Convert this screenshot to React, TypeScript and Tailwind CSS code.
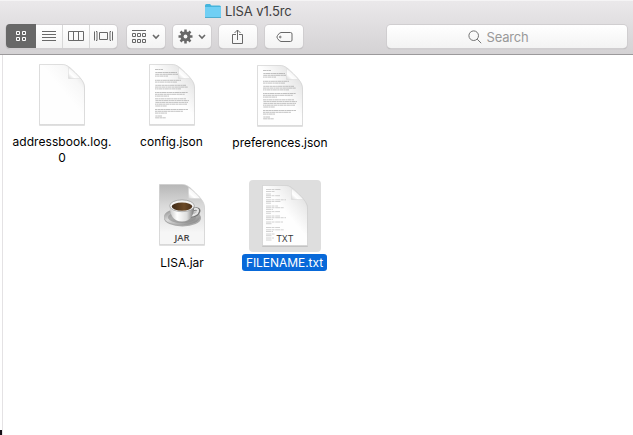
import React from "react";

function Page({ id, children, shade = false }: { id: string; children?: React.ReactNode; shade?: boolean }) {
  return (
    <svg width="52" height="66" viewBox="-3 -2 52 66" className="block overflow-visible">
      <defs>
        <linearGradient id={`${id}-body`} x1="1" y1="0" x2="0.45" y2="0.6">
          <stop offset="0" stopColor="#d4d4d4" />
          <stop offset="0.4" stopColor={shade ? "#ebebeb" : "#f7f7f7"} />
          <stop offset="0.8" stopColor="#fefefe" />
        </linearGradient>
        <linearGradient id={`${id}-jar`} x1="0" y1="0" x2="0" y2="1">
          <stop offset="0" stopColor="#b7b7b7" />
          <stop offset="0.35" stopColor="#d9d9d9" />
          <stop offset="0.8" stopColor="#f6f6f6" />
        </linearGradient>
        <linearGradient id={`${id}-fold`} x1="0" y1="1" x2="0.65" y2="0.35">
          <stop offset="0" stopColor="#d8d8d8" />
          <stop offset="0.45" stopColor="#ffffff" />
          <stop offset="1" stopColor="#f0f0f0" />
        </linearGradient>
        <filter id={`${id}-shadow`} x="-20%" y="-10%" width="140%" height="130%">
          <feDropShadow dx="0" dy="0.5" stdDeviation="0.7" floodOpacity="0.3" />
        </filter>
      </defs>
      <path
        d="M.5.5H23C28 .5 31 3.500 36 8.500C42 14.500 45.500 18 45.500 24V60.500H.5Z"
        fill={id === "jar" ? "url(#jar-jar)" : `url(#${id}-body)`}
        stroke="#d0d0d0"
        strokeWidth=".6"
        filter={`url(#${id}-shadow)`}
      />
      {children}
      <path d="M29.500 3.500V14.500H41.500C37.500 10 34 6.500 29.500 3.500Z" fill={`url(#${id}-fold)`} stroke="#d2d2d2" strokeWidth=".4" />
    </svg>
  );
}

const paragraphs: number[][] = [
  [5.500, 8], [8.500, 22], [10.300, 23], [12.100, 13], [16.300, 26], [18.100, 22],
  [21.300, 31], [23.100, 33], [24.900, 26], [28.500, 33], [30.300, 30], [32.100, 14],
  [34.800, 31], [36.600, 34], [38.400, 33], [40.200, 32], [42, 12], [45.500, 33],
  [47.300, 28], [49.100, 12], [52, 7], [53.800, 11],
];

function Letter() {
  return (
    <g stroke="#848484" strokeWidth=".8" opacity=".62" strokeDasharray="3.400 .3 1.700 .25 4.200 .35 2.300 .3">
      {paragraphs.map(([y, w], i) => <path key={y} d={`M6 ${y}h${w}`} strokeDashoffset={i * 2.7} />)}
    </g>
  );
}

const listing: number[][] = [
  [4.500, 15], [6.500, 9], [9, 5], [10.700, 14], [12.400, 5], [14.800, 20], [16.500, 15], [18.200, 5], [21, 12], [22.700, 18], [24.400, 7], [26.600, 14], [28.300, 5],
  [31, 14], [32.700, 20], [34.400, 7], [37, 17], [38.700, 6], [42.500, 14], [44.800, 18], [46.500, 7], [49, 9], [50.700, 6], [53, 8], [55, 6],
];

function Cup() {
  return (
    <g>
      <defs>
        <linearGradient id="saucer" x1="0" x2="1" y2="1">
          <stop stopColor="#787878" /><stop offset=".4" stopColor="#dcdcdc" /><stop offset="1" stopColor="#777" />
        </linearGradient>
        <linearGradient id="china" x1="0" x2="1">
          <stop stopColor="#c9c9c9" /><stop offset=".3" stopColor="#fff" /><stop offset=".7" stopColor="#ddd" /><stop offset="1" stopColor="#777" />
        </linearGradient>
        <linearGradient id="coffee"><stop stopColor="#3d2816" /><stop offset=".6" stopColor="#6c4a27" /><stop offset="1" stopColor="#49301b" /></linearGradient>
      </defs>
      <ellipse cx="23.500" cy="34" rx="18.500" ry="8.500" fill="#666" opacity=".5" />
      <ellipse cx="23" cy="32.700" rx="18" ry="8.500" fill="url(#saucer)" />
      <ellipse cx="23" cy="33.500" rx="14" ry="5.500" fill="#888" opacity=".55" />
      <path d="M34.500 25.500c8-3 7 6-3 6.500" fill="none" stroke="#747474" strokeWidth="3.300" />
      <path d="M34.500 25.200c7-2.500 6 5.500-3 6.500" fill="none" stroke="#e5e5e5" strokeWidth="2" />
      <path d="M10.800 21.500C10.500 30 14 37.500 23 37.500S35.500 30 35.200 21.500Z" fill="url(#china)" />
      <ellipse cx="23" cy="21.800" rx="12.300" ry="5.900" fill="#f4f4f4" stroke="#8f8f8f" strokeWidth=".6" />
      <ellipse cx="23" cy="22.600" rx="10.300" ry="4.200" fill="url(#coffee)" />
    </g>
  );
}

const button = "h-[23px] flex shrink-0 items-center justify-center rounded-[4px] bg-linear-to-b from-white to-[#f3f3f3] shadow-[0_0_0_1px_#d0ced0,0_1px_1px_#a5a3a5] text-[#686868]";

function Chevron() {
  return <svg width="8" height="6" viewBox="0 0 8 6"><path d="M1 1l3 3 3-3" fill="none" stroke="currentColor" strokeWidth="1.600" /></svg>;
}

function Toolbar() {
  return (
    <header className="h-[55px] border-b border-[#9b999b] bg-linear-to-b from-[#ebe9eb] to-[#d4d2d4] shadow-[inset_0_1px_0_#f5f4f5]">
      <div className="flex h-[24px] pl-[205px] pt-[3px]">
        <svg width="16" height="16" viewBox="0 0 16 16" className="mr-[4px]">
          <path d="M0 13V2.500Q0 1 1.500 1H5L6.500 2.500H14.500Q16 2.500 16 4V13Z" fill="#45b4dc" />
          <path d="M0 4H16V14.500H0Z" fill="#70cff4" /><path d="M0 14.500H16" stroke="#4facce" />
        </svg>
        <h1 className="whitespace-nowrap text-[13px] font-normal leading-[17px] tracking-[-0.12px] text-[#403e40]">LISA v1.5rc</h1>
      </div>
      <div className="flex px-[6px] pt-[1px]">
        <div className={`${button} w-[111px]`}>
          <div className="-mt-px flex h-[24px] w-[30px] shrink-0 items-center justify-center rounded-l-[4px] bg-[#686868]">
            <svg width="11" height="11" viewBox="0 0 11 11" fill="none" stroke="white"><path d="M.5.5h3v3h-3ZM6.500.5h3v3h-3ZM.5 6.500h3v3h-3ZM6.500 6.500h3v3h-3Z" /></svg>
          </div>
          <div className="flex h-full w-[27px] items-center justify-center border-r border-[#d8d8d8]">
            <svg width="14" height="11" stroke="currentColor"><path d="M0 .5h14M0 3.500h14M0 6.500h14M0 9.500h14" /></svg>
          </div>
          <div className="flex h-full w-[27px] items-center justify-center border-r border-[#d8d8d8]">
            <svg width="16" height="11" fill="none" stroke="currentColor"><path d="M.5.5h15v9H.5ZM5.500.5v9M10.500.5v9" /></svg>
          </div>
          <div className="flex h-full w-[27px] items-center justify-center">
            <svg width="19" height="11" fill="none" stroke="currentColor"><path d="M.5.5v9M5.500 1.500h8v7h-8ZM18.500.5v9M2 .5h1v9H2M17 .5h-1v9h1" /></svg>
          </div>
        </div>
        <div className={`${button} ml-[10px] w-[38px] gap-[5px]`}>
          <svg width="15" height="14" fill="none" stroke="currentColor"><path d="M0 .5h14M.5 3.500h3v3h-3ZM5.500 3.500h3v3h-3ZM10.500 3.500h3v3h-3ZM.5 9.500h3v3h-3ZM5.500 9.500h3v3h-3ZM10.500 9.500h3v3h-3Z" /></svg>
          <Chevron />
        </div>
        <div className={`${button} ml-[8px] w-[38px] gap-[5px]`}>
          <svg width="15" height="15" viewBox="0 0 15 15">
            <g stroke="currentColor" strokeWidth="2.500"><path d="M7.500.5v14M.5 7.500h14M2.500 2.500l10 10M12.500 2.500l-10 10" /></g>
            <circle cx="7.500" cy="7.500" r="5" fill="currentColor" /><circle cx="7.500" cy="7.500" r="1.900" fill="#f8f8f8" />
          </svg>
          <Chevron />
        </div>
        <div className={`${button} ml-[8px] w-[38px]`}>
          <svg width="12" height="16" viewBox="0 0 12 16" fill="none" stroke="currentColor"><path d="M4 5.500H.5v9h10v-9H7M5.500 11V1M2.500 4l3-3 3 3" /></svg>
        </div>
        <div className={`${button} ml-[8px] w-[38px]`}>
          <svg width="17" height="10" viewBox="0 0 17 10" fill="none" stroke="currentColor"><path d="M5 .5H14.500Q16 .5 16 2V8Q16 9.500 14.500 9.500H5Q3.500 9.500 1.500 6.500Q.3 5 1.500 3.500Q3.500 .5 5 .5Z" /><circle cx="4.300" cy="5" r=".8" /></svg>
        </div>
        <div className={`${button} ml-[84px] w-[240px] gap-[5px] pr-[18px]`}>
          <svg width="14" height="14" viewBox="0 0 14 14" fill="none" stroke="#747474"><circle cx="5.700" cy="5.700" r="4.800" /><path d="M9.200 9.200l4 4" /></svg>
          <span className="text-[13px] leading-[20px] tracking-[-0.2px] text-[#999]">Search</span>
        </div>
      </div>
    </header>
  );
}

function Label({ children }: { children: React.ReactNode }) {
  return <div className="text-center text-[12px] leading-[16px] text-black">{children}</div>;
}

export default function App() {
  return (
    <div className="flex h-[435px] w-[633px] flex-col overflow-hidden bg-white font-['Inter','Liberation_Sans',sans-serif]">
      <Toolbar />
      <div className="flex min-h-0 flex-1">
        <div className="flex w-[3px] shrink-0 flex-col justify-end border-r border-[#e4e2e4]"><div className="h-[5px] bg-[#171017]" /></div>
        <main className="flex-1 pt-[7px]">
          <div className="flex h-[118px] pl-[5px]">
            <div className="flex w-[108px] flex-col items-center">
              <Page id="address" />
              <div className="mt-[6px]"><Label><span className="tracking-[0.05px]">addressbook.log.</span><br />0</Label></div>
            </div>
            <div className="flex w-[110px] flex-col items-center pl-[2px]">
              <Page id="config" shade><Letter /></Page>
              <div className="mr-[1px] mt-[6px]"><Label>config.json</Label></div>
            </div>
            <div className="flex w-[108px] flex-col items-center pt-px">
              <Page id="prefs" shade><Letter /></Page>
              <div className="mt-[6px]"><Label>preferences.json</Label></div>
            </div>
          </div>
          <div className="flex pl-[130px]">
            <div className="flex w-[98px] flex-col items-center pt-[2px]">
              <Page id="jar">
                <Cup />
                <text x="23" y="57" textAnchor="middle" fontFamily="Open Sans" fontSize="9.500" fontWeight="600" fill="#454545">JAR</text>
              </Page>
              <div className="mt-[7px]"><Label>LISA.jar</Label></div>
            </div>
            <div className="ml-[11px] flex w-[85px] flex-col items-center">
              <div className="flex h-[72px] w-[72px] justify-center rounded-[4px] bg-[#dedede] pt-[3px]">
                <Page id="txt" shade>
                  <g stroke="#999" strokeWidth=".75" opacity=".58" strokeDasharray="5 .5 3 .7">{listing.map(([y, w]) => <path key={y} d={`M4 ${y}h${w}`} />)}</g>
                  <text x="23" y="57" textAnchor="middle" fontFamily="Open Sans" fontSize="9.500" letterSpacing=".4" fill="#353535">TXT</text>
                </Page>
              </div>
              <div className="mt-[2px] h-[17px] w-[85px] rounded-[3px] bg-[#0869d9] text-center text-[12px] leading-[17px] tracking-[-0.05px] text-white">FILENAME.txt</div>
            </div>
          </div>
        </main>
      </div>
    </div>
  );
}
